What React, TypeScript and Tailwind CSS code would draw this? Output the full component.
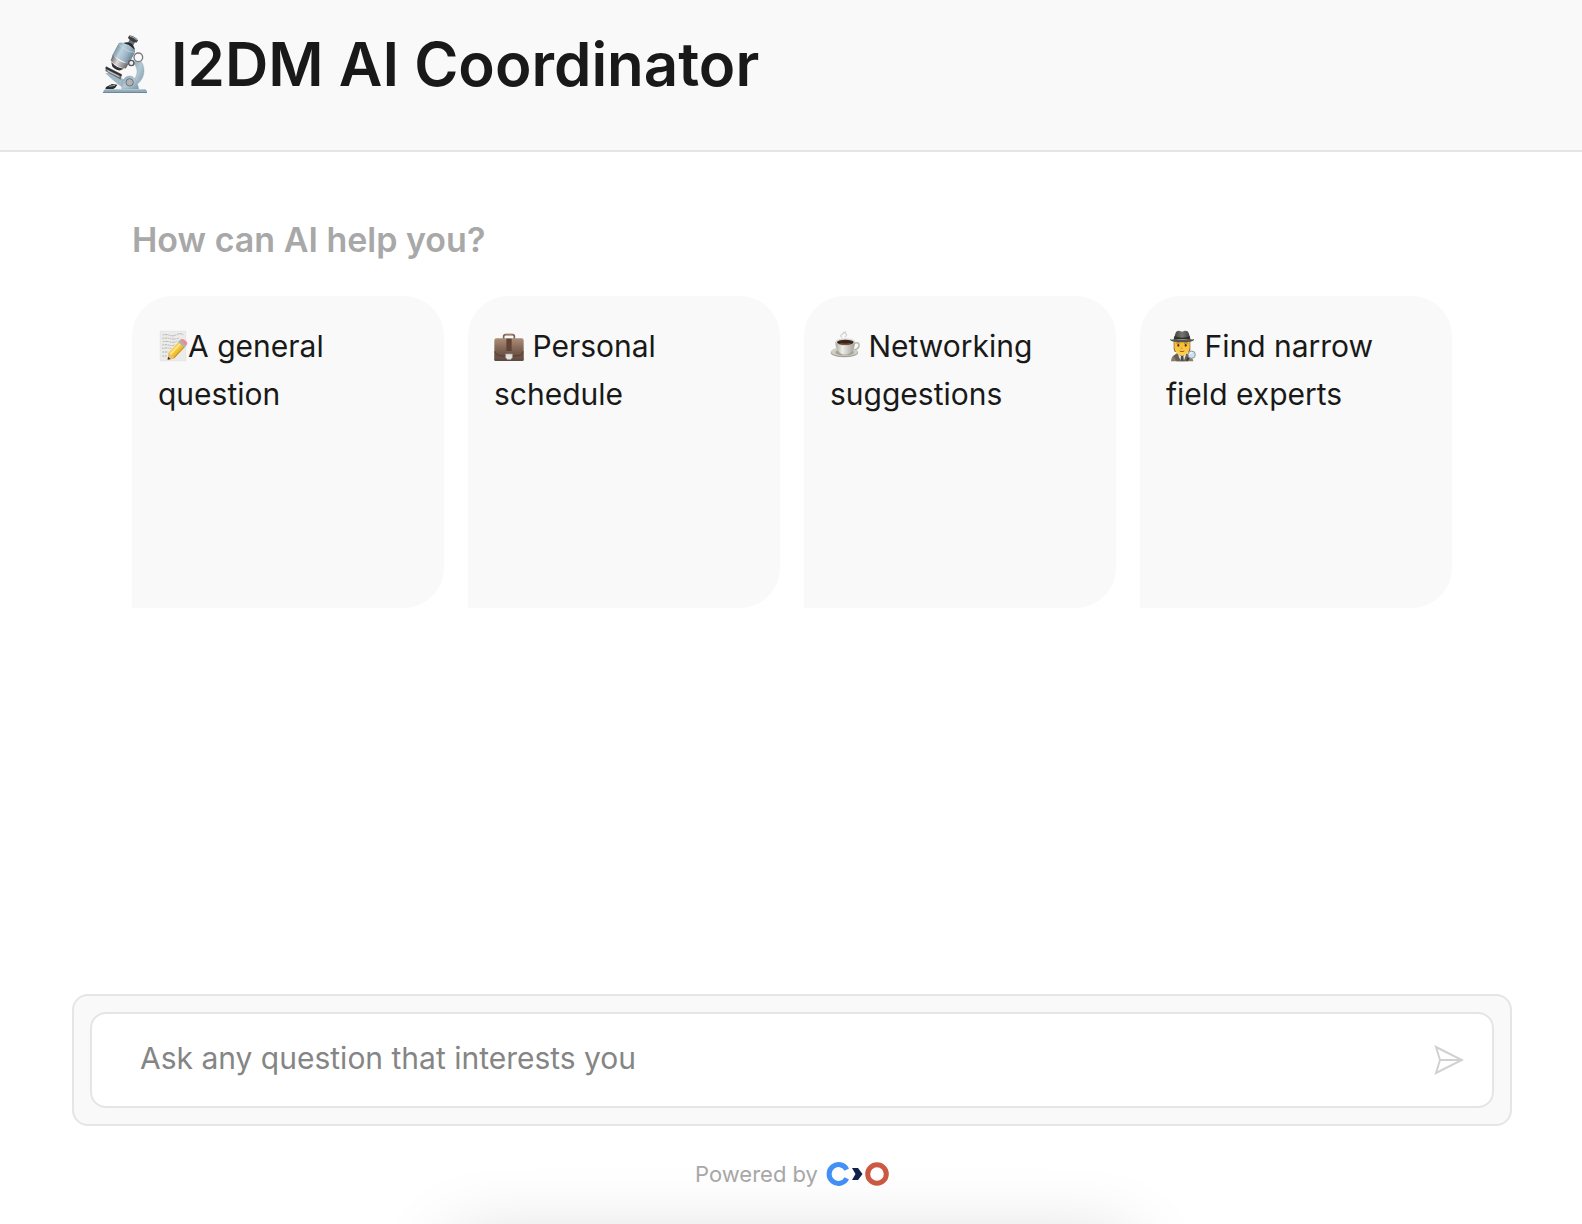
import React, { useState } from "react";

const MicroscopeIcon: React.FC = () => (
  <svg className="w-[46px] h-[62px] shrink-0" viewBox="36 36 138 186" aria-hidden="true">
    <defs>
      <linearGradient id="tube" x1="0" y1="0" x2="1" y2="0">
        <stop offset="0" stopColor="#7d95a4" />
        <stop offset="0.3" stopColor="#bdd1de" />
        <stop offset="0.65" stopColor="#9db6c6" />
        <stop offset="1" stopColor="#6b8493" />
      </linearGradient>
      <linearGradient id="lens" x1="0" y1="0" x2="1" y2="0">
        <stop offset="0" stopColor="#66676a" />
        <stop offset="0.4" stopColor="#dcdad8" />
        <stop offset="1" stopColor="#66666a" />
      </linearGradient>
      <linearGradient id="arm" x1="0" y1="0" x2="1" y2="1">
        <stop offset="0" stopColor="#8aa2b1" />
        <stop offset="0.5" stopColor="#b3c9d6" />
        <stop offset="1" stopColor="#7d96a5" />
      </linearGradient>
    </defs>
    <path d="M146 112C168 132 168 168 144 188L128 180C144 164 146 142 130 126Z" fill="url(#arm)" stroke="#8ba1ae" />
    <path d="M46 156L62 156L104 176L124 198L96 198C80 188 62 172 46 156Z" fill="#a2b8c5" />
    <path d="M95 204C96 178 104 165 119 165C135 165 142 182 146 204Z" fill="url(#arm)" stroke="#8298a5" />
    <circle cx="119" cy="184" r="11" fill="#b4b3b2" stroke="#657681" strokeWidth="3" />
    <path d="M48 136L96 160L92 176L46 150Z" fill="#6b6f72" />
    <path d="M48 137L95 161L94 166L46 142Z" fill="#2b2c2e" />
    <path d="M52 149L88 167" stroke="#d9dcdd" strokeWidth="3" />
    <path d="M48 198L66 189L82 191L76 200L66 206L46 204Z" fill="#2b2e30" />
    <path d="M58 196L75 193" stroke="#a4a9aa" strokeWidth="3" />
    <path d="M47 205H164Q171 206 171 215H39Q40 206 47 205Z" fill="#8fa9b9" />
    <path d="M48 206H164" stroke="#c0d4df" strokeWidth="2" />
    <path d="M39 213H171V216H39Z" fill="#6d8897" />
    <g transform="rotate(28 100 100)">
      <path d="M96 50H114V68H96Z" fill="#6c7073" />
      <path d="M89 42Q103 35 119 42V50Q104 56 89 50Z" fill="#3a3c3f" />
      <path d="M92 43Q104 39 116 43" stroke="#a5aaab" strokeWidth="3" fill="none" />
      <path d="M84 70Q103 50 123 70V80H84Z" fill="#25282a" />
      <path d="M72 78Q76 70 86 70Q102 65 116 70Q126 71 128 78V119H72Z" fill="url(#tube)" />
      <path d="M73 79Q102 90 127 79" stroke="#cbdbe5" strokeWidth="2" fill="none" />
      <path d="M73 117Q101 129 127 117V134Q101 145 75 134Z" fill="url(#lens)" />
      <path d="M79 137Q101 146 122 137L113 148Q98 153 87 147Z" fill="#323236" />
    </g>
    <circle cx="145" cy="109" r="13" fill="#fafafa" stroke="#77797b" strokeWidth="4" />
    <circle cx="124" cy="126" r="8" fill="#efefef" stroke="#515558" strokeWidth="4" />
  </svg>
);

const NoteIcon: React.FC = () => (
  <svg className="inline-block w-[30px] h-8 align-[-5px]" viewBox="24 30 90 96" aria-hidden="true">
    <defs>
      <linearGradient id="pencil" x1="0" y1="0" x2="1" y2="1">
        <stop offset="0" stopColor="#ffe477" />
        <stop offset="0.5" stopColor="#f5c43a" />
        <stop offset="1" stopColor="#b7831b" />
      </linearGradient>
    </defs>
    <path d="M30 33H108V123H30Z" fill="#ebebea" stroke="#dcdcdc" />
    <g stroke="#959595" strokeWidth="2" strokeDasharray="5 2 8 2 3 2" fill="none">
      <path d="M38 45Q48 42 58 46T80 44T101 45" />
      <path d="M37 55Q50 53 62 56T88 54" />
      <path d="M38 65Q51 63 62 66T82 63" />
      <path d="M37 75Q49 73 60 76T74 73" />
      <path d="M37 85Q48 83 64 85" />
      <path d="M37 96H55" />
      <path d="M37 108H50" />
    </g>
    <path d="M53 119L55 98L87 64L105 81L72 116Z" fill="url(#pencil)" />
    <path d="M60 104L92 70" stroke="#ffe98d" strokeWidth="5" />
    <path d="M71 114L103 80" stroke="#c58e1e" strokeWidth="3" />
    <path d="M53 119L55 99L61 101L63 108L71 110L71 116Z" fill="#e8bd87" />
    <path d="M53 119L54 110L62 117Z" fill="#37322b" />
    <path d="M84 66L90 59L109 77L103 83Z" fill="#a9b5bb" />
    <path d="M90 60L95 57Q101 56 107 62T112 72L107 78Z" fill="#e98d92" />
  </svg>
);

const BriefcaseIcon: React.FC = () => (
  <svg className="inline-block w-[30px] h-8 align-[-5px]" viewBox="42 30 90 96" aria-hidden="true">
    <defs>
      <linearGradient id="leather" x1="0" y1="0" x2="0" y2="1">
        <stop offset="0" stopColor="#ab8e79" />
        <stop offset="0.45" stopColor="#846756" />
        <stop offset="1" stopColor="#5a4437" />
      </linearGradient>
    </defs>
    <path d="M71 57V49Q71 44 77 44H97Q103 44 103 49V57" fill="none" stroke="#7c5e4e" strokeWidth="5" />
    <path d="M76 43H98" stroke="#b4998a" strokeWidth="2" />
    <path d="M49 55H125Q131 55 131 62V121H43V62Q43 55 49 55Z" fill="url(#leather)" />
    <path d="M44 94Q49 107 68 108H106Q125 107 130 94V120H44Z" fill="#6a5145" />
    <path d="M44 94Q49 107 68 108H106Q125 107 130 94" fill="none" stroke="#49372e" strokeWidth="2" />
    <path d="M79 56H95V93H79Z" fill="#5f4436" />
    <path d="M77 102H97V112L92 119H82L77 112Z" fill="#e6e4e3" stroke="#a3a09e" strokeWidth="2" />
    <path d="M44 121H130" stroke="#45332a" strokeWidth="3" />
  </svg>
);

const CoffeeIcon: React.FC = () => (
  <svg className="inline-block w-[30px] h-8 align-[-5px]" viewBox="30 30 90 96" aria-hidden="true">
    <defs>
      <linearGradient id="cup" x1="0" y1="0" x2="1" y2="0">
        <stop offset="0" stopColor="#aaa8a0" />
        <stop offset="0.35" stopColor="#efeee9" />
        <stop offset="1" stopColor="#a19f97" />
      </linearGradient>
    </defs>
    <path d="M66 52Q58 47 66 43T69 35M74 51Q84 46 77 41T79 36" fill="none" stroke="#d5d5d5" strokeWidth="4" />
    <ellipse cx="73" cy="98" rx="41" ry="14" fill="#a3a298" />
    <ellipse cx="73" cy="95" rx="40" ry="13" fill="#d0cfc7" />
    <ellipse cx="74" cy="97" rx="28" ry="9" fill="#a3a198" />
    <path d="M100 72Q118 63 117 76Q115 91 96 89" fill="none" stroke="#bab9b1" strokeWidth="5" />
    <path d="M46 66H105Q105 92 87 101Q75 106 63 101Q46 91 46 66Z" fill="url(#cup)" />
    <ellipse cx="76" cy="66" rx="29" ry="10" fill="#dfded7" stroke="#aeaca5" />
    <ellipse cx="76" cy="67" rx="25" ry="8" fill="#3a241b" />
    <path d="M56 69Q76 79 96 69Q76 74 56 69Z" fill="#966747" />
  </svg>
);

const DetectiveIcon: React.FC = () => (
  <svg className="inline-block w-[30px] h-8 align-[-5px]" viewBox="33 30 90 96" aria-hidden="true">
    <defs>
      <linearGradient id="hat" x1="0" y1="0" x2="1" y2="0">
        <stop offset="0" stopColor="#40403e" />
        <stop offset="0.5" stopColor="#777672" />
        <stop offset="1" stopColor="#3d3d3a" />
      </linearGradient>
      <linearGradient id="face" x1="0" y1="0" x2="0" y2="1">
        <stop offset="0" stopColor="#f3b72f" />
        <stop offset="1" stopColor="#ffd34c" />
      </linearGradient>
    </defs>
    <path d="M56 59H106V91Q101 99 94 96H65Q56 98 56 83Z" fill="#8f6a42" />
    <path d="M48 124Q49 108 62 103L75 100H87L100 104Q113 109 115 124Z" fill="#8a7b69" />
    <path d="M69 101L81 111L94 101L89 124H74Z" fill="#ece9e3" />
    <path d="M78 108H85L87 124H76Z" fill="#494b50" />
    <path d="M66 99L78 124H65L56 109ZM95 99L86 124H99L108 109Z" fill="#6b5f52" />
    <path d="M58 61H104V80Q103 103 81 107Q59 102 58 80Z" fill="url(#face)" />
    <path d="M64 70Q69 66 74 70M87 70Q93 66 98 70" fill="none" stroke="#764b23" strokeWidth="2" />
    <ellipse cx="70" cy="76" rx="3" ry="4" fill="#46301f" />
    <ellipse cx="92" cy="76" rx="3" ry="4" fill="#46301f" />
    <path d="M80 80L78 86H84" fill="none" stroke="#d99323" strokeWidth="2" />
    <path d="M74 93Q81 97 88 93" fill="none" stroke="#a2552c" strokeWidth="3" />
    <path d="M57 55L62 38Q65 31 75 33Q81 36 87 33Q99 31 101 39L106 55Z" fill="url(#hat)" />
    <path d="M58 49Q82 57 104 49L106 58H56Z" fill="#2f2f2d" />
    <path d="M45 57Q52 61 59 56Q82 62 104 56Q111 60 117 57Q118 63 106 65Q81 69 57 65Q45 63 45 57Z" fill="#555552" />
    <path d="M101 112L96 122" stroke="#34373a" strokeWidth="5" />
    <circle cx="110" cy="104" r="11" fill="#cbe1eb" stroke="#8e9699" strokeWidth="3" />
    <path d="M104 103Q106 97 112 98" fill="none" stroke="#fff" strokeWidth="3" />
  </svg>
);

const SendIcon: React.FC = () => (
  <svg className="w-[30px] h-[30px]" viewBox="0 0 30 30" fill="none" stroke="#d1d1d1" strokeWidth="2" aria-hidden="true">
    <path d="M2 2L28 15L2 28L6 15Z" />
    <path d="M6 15H27" />
  </svg>
);

const BrandLogo: React.FC = () => (
  <svg className="w-[63px] h-6" viewBox="0 0 63 24" fill="none" role="img" aria-label="Brand logo">
    <path d="M20.8 7.6A9.4 9.4 0 1 0 20.8 16.4" stroke="#4390f7" strokeWidth="5" />
    <path d="M26 6H32L36.5 12L32 18H26L29.5 12Z" fill="#0f214c" />
    <circle cx="51" cy="12" r="9.3" stroke="#cc5944" strokeWidth="5" />
  </svg>
);

const suggestions = [
  { icon: <NoteIcon />, label: "A general question" },
  { icon: <BriefcaseIcon />, label: " Personal schedule" },
  { icon: <CoffeeIcon />, label: " Networking suggestions" },
  { icon: <DetectiveIcon />, label: " Find narrow field experts" },
];

const App: React.FC = () => {
  const [question, setQuestion] = useState("");

  return (
    <div className="relative min-h-screen overflow-hidden bg-white flex flex-col font-['Inter',sans-serif] text-[#191919]">
      {/* Header */}
      <header className="bg-[#f9f9f9] border-b-2 border-[#e5e5e5] pt-7 pb-[50px] px-[102px]">
        <h1 className="flex items-center gap-[23px] text-[60px] leading-[72px] font-semibold">
          <MicroscopeIcon />
          I2DM AI Coordinator
        </h1>
      </header>

      {/* Suggestions */}
      <main className="flex-1 pt-16 pl-[132px] pr-[130px]">
        <h2 className="text-[34px] leading-[48px] font-semibold text-[#a8a8a8]">
          How can AI help you?
        </h2>
        <div className="mt-8 grid grid-cols-4 gap-6">
          {suggestions.map(({ icon, label }) => (
            <button
              key={label}
              type="button"
              onClick={() => setQuestion(label.trim())}
              className="aspect-square flex items-start bg-[#f9f9f9] rounded-[40px] rounded-bl-none p-[26px] text-left text-[30px] leading-[48px]"
            >
              <span>
                {icon}
                {label}
              </span>
            </button>
          ))}
        </div>
      </main>

      {/* Question form */}
      <form
        onSubmit={(e) => e.preventDefault()}
        className="ml-[72px] mr-[70px] p-4 bg-[#f9f9f9] border-2 border-[#e5e5e5] rounded-2xl"
      >
        <div className="flex items-center h-24 pl-12 pr-7 bg-white border-2 border-[#e5e5e5] rounded-2xl">
          <input
            type="text"
            aria-label="Question"
            value={question}
            onChange={(e) => setQuestion(e.target.value)}
            placeholder="Ask any question that interests you"
            className="flex-1 min-w-0 pb-1 bg-transparent outline-none text-[30px] leading-[48px] placeholder:text-[#858585]"
          />
          <button type="submit" aria-label="Send">
            <SendIcon />
          </button>
        </div>
      </form>

      <footer className="flex items-center justify-center gap-2 pt-8 pb-[34px] pl-[2px] text-[22px] leading-8 text-[#a8a8a8]">
        Powered by
        <a href="#" aria-label="Platform website">
          <BrandLogo />
        </a>
      </footer>

      {/* Soft shadow rising from below the page edge */}
      <div className="pointer-events-none absolute top-full left-1/2 mt-4 h-40 w-[680px] -translate-x-1/2 shadow-[0_0_76px_rgba(0,0,0,0.16)]" />
    </div>
  );
};

export default App;
